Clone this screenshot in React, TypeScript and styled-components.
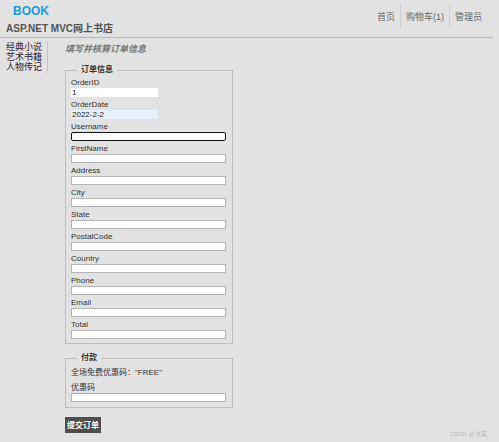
import React from "react";
import styled, { createGlobalStyle } from "styled-components";

const GlobalStyle = createGlobalStyle`
  html, body {
    margin: 0;
    padding: 0;
    background: #e2e2e2;
    font-family: "Liberation Sans", Arial, "Noto Sans CJK SC", sans-serif;
  }
  #root {
    width: 499px;
    height: 442px;
    position: relative;
    overflow: hidden;
  }
`;

const Header = styled.header`
  display: flex;
  justify-content: space-between;
  width: 493px;
  height: 38px;
  border-bottom: 1px solid #b8b8b8;
  box-sizing: border-box;
`;

const Brand = styled.div`
  display: flex;
  flex-direction: column;
  padding-left: 6px;
`;

const Logo = styled.div`
  color: #1c9ad6;
  font-weight: bold;
  font-size: 12px;
  line-height: 14px;
  margin: 4px 0 0 7px;
`;

const SiteName = styled.div`
  color: #555;
  font-weight: bold;
  font-size: 10px;
  line-height: 12px;
  margin-top: 5px;
`;

const Nav = styled.nav`
  display: flex;
  align-items: stretch;
  height: 24px;
  margin-top: 4px;
  margin-right: 6px;
`;

const NavItem = styled.a<{ first?: boolean }>`
  display: flex;
  align-items: center;
  padding: 0 5px;
  font-size: 9px;
  color: #666;
  text-decoration: none;
  border-left: ${({ first }) => (first ? "none" : "1px solid #cfcfcf")};
`;

const Main = styled.div`
  display: flex;
  padding-top: 4px;
`;

const Sidebar = styled.ul`
  list-style: none;
  margin: 0 0 0 6px;
  padding: 0 5px 1px 0;
  border-right: 1px solid #c4c4c4;
  align-self: flex-start;
`;

const SideItem = styled.li`
  font-size: 9px;
  line-height: 10px;
  color: #2a1f33;
  font-family: "Noto Sans CJK SC", sans-serif;
`;

const Content = styled.div`
  margin-left: 17px;
  width: 168px;
`;

const Title = styled.div`
  font-size: 9px;
  line-height: 12px;
  color: #777;
  font-style: italic;
  font-weight: bold;
  margin-top: 1px;
  margin-bottom: 10px;
`;

const Fieldset = styled.fieldset<{ pb: number; mt?: number }>`
  margin: ${({ mt }) => mt ?? 0}px 0 0 0;
  padding: 0 7px ${({ pb }) => pb}px 5px;
  border: 1px solid #bdbdbd;
  min-width: 0;
`;

const Legend = styled.legend`
  font-size: 8px;
  font-weight: bold;
  color: #333;
  padding: 0 4px;
  margin-left: 6px;
  line-height: 10px;
`;

const Field = styled.div`
  display: flex;
  flex-direction: column;
  margin-top: 3px;
`;

const Label = styled.label`
  font-size: 8px;
  line-height: 10px;
  color: #333;
  height: 10px;
`;

const Input = styled.input<{ variant?: "plain" | "auto" | "focus" }>`
  box-sizing: border-box;
  height: 9px;
  margin: 0;
  padding: 0 1px;
  font-size: 8px;
  line-height: 8px;
  color: #222;
  font-family: "Liberation Sans", Arial, sans-serif;
  outline: none;
  width: ${({ variant }) => (variant === "plain" || variant === "auto" ? "87px" : "155px")};
  background: ${({ variant }) => (variant === "auto" ? "#e8f0fe" : "#fff")};
  border: ${({ variant }) =>
    variant === "plain" || variant === "auto"
      ? "none"
      : variant === "focus"
      ? "1px solid #111"
      : "1px solid #b5b5b5"};
  border-radius: ${({ variant }) => (variant === "focus" ? "2px" : "0")};
`;

const Note = styled.div`
  font-size: 8px;
  line-height: 10px;
  color: #333;
  margin-top: 5px;
  margin-bottom: 5px;
`;

const Submit = styled.button`
  margin-top: 9px;
  background: #4d4d4d;
  color: #fff;
  border: none;
  font-size: 8px;
  font-weight: bold;
  padding: 3px 2px 4px;
  line-height: 9px;
  font-family: "Noto Sans CJK SC", sans-serif;
`;

const Watermark = styled.div`
  position: absolute;
  right: 9px;
  bottom: 4px;
  font-size: 6px;
  color: #b9b9b9;
`;

const orderFields = [
  "FirstName",
  "Address",
  "City",
  "State",
  "PostalCode",
  "Country",
  "Phone",
  "Email",
  "Total",
];

export default function App() {
  return (
    <>
      <GlobalStyle />
      <Header>
        <Brand>
          <Logo>BOOK</Logo>
          <SiteName>ASP.NET MVC网上书店</SiteName>
        </Brand>
        <Nav>
          <NavItem first>首页</NavItem>
          <NavItem>购物车(1)</NavItem>
          <NavItem>管理员</NavItem>
        </Nav>
      </Header>
      <Main>
        <Sidebar>
          <SideItem>经典小说</SideItem>
          <SideItem>艺术书籍</SideItem>
          <SideItem>人物传记</SideItem>
        </Sidebar>
        <Content>
          <Title>填写并核算订单信息</Title>
          <Fieldset pb={4}>
            <Legend>订单信息</Legend>
            <Field>
              <Label>OrderID</Label>
              <Input variant="plain" defaultValue="1" readOnly />
            </Field>
            <Field>
              <Label>OrderDate</Label>
              <Input variant="auto" defaultValue="2022-2-2" readOnly />
            </Field>
            <Field>
              <Label>Username</Label>
              <Input variant="focus" />
            </Field>
            {orderFields.map((f) => (
              <Field key={f}>
                <Label>{f}</Label>
                <Input />
              </Field>
            ))}
          </Fieldset>
          <Fieldset pb={5} mt={9}>
            <Legend>付款</Legend>
            <Note>全场免费优惠码："FREE"</Note>
            <Field>
              <Label>优惠码</Label>
              <Input />
            </Field>
          </Fieldset>
          <Submit>提交订单</Submit>
        </Content>
      </Main>
      <Watermark>CSDN @卡其_</Watermark>
    </>
  );
}
